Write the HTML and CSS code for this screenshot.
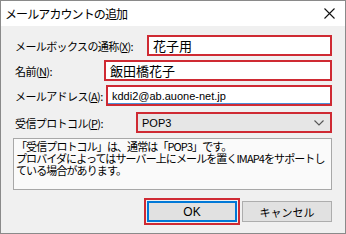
FILE: index.html
```html
<!DOCTYPE html>
<html lang="ja">
<head>
    <meta charset="UTF-8">
    <title>メールアカウントの追加</title>
    <link rel="stylesheet" href="styles.css">
</head>
<body>
    <div class="window">
        <!-- Title bar -->
        <div class="titlebar">
            <span class="title">メールアカウントの追加</span>
            <svg class="close" width="11" height="11" viewBox="0 0 11 11">
                <path d="M0.5 0.5 L10.5 10.5 M10.5 0.5 L0.5 10.5" stroke="#111" stroke-width="1.1" fill="none"/>
            </svg>
        </div>

        <div class="client">
            <div class="row">
                <label class="label label-mailbox">メールボックスの通称(<u>X</u>):</label>
                <div class="field marked">花子用</div>
            </div>
            <div class="row">
                <label class="label label-name">名前(<u>N</u>):</label>
                <div class="field marked">飯田橋花子</div>
            </div>
            <div class="row">
                <label class="label label-address">メールアドレス(<u>A</u>):</label>
                <div class="field marked focused latin">kddi2@ab.auone-net.jp</div>
            </div>
            <div class="row row-protocol">
                <label class="label label-protocol">受信プロトコル(<u>P</u>):</label>
                <div class="select marked">
                    <span class="latin">POP3</span>
                    <svg width="10" height="6" viewBox="0 0 10 6">
                        <path d="M0.5 0.5 L5 5 L9.5 0.5" stroke="#555" stroke-width="1.1" fill="none"/>
                    </svg>
                </div>
            </div>

            <div class="info">
                <div>「受信プロトコル」は、通常は「POP3」です。</div>
                <div>プロバイダによってはサーバー上にメールを置くIMAP4をサポートし</div>
                <div>ている場合があります。</div>
            </div>

            <div class="buttons">
                <button class="btn btn-ok">OK</button>
                <button class="btn">キャンセル</button>
            </div>
        </div>
    </div>
</body>
</html>
```

FILE: styles.css
```css
/* General */
body {
    margin: 0;
    padding: 0;
    background: #ffffff;
    font-family: "Noto Sans CJK JP", "Noto Sans", sans-serif;
    color: #000;
}

.window {
    width: 346px;
    height: 234px;
    box-sizing: border-box;
    border: 1px solid #8a8a8a;
    display: flex;
    flex-direction: column;
    background: #f0f0f0;
}

/* Title bar */
.titlebar {
    height: 25px;
    background: #ffffff;
    display: flex;
    align-items: center;
    justify-content: space-between;
    padding: 0 10px 0 4px;
}

.title {
    font-size: 12px;
    letter-spacing: -0.9px;
}

/* Form rows */
.client {
    flex: 1;
    padding: 9px 13px 0 12px;
    display: flex;
    flex-direction: column;
}

.row {
    display: flex;
    align-items: center;
    height: 21px;
    margin-bottom: 4px;
}

.row-protocol {
    margin-top: 2px;
    margin-bottom: 5px;
}

.label {
    font-size: 11px;
    letter-spacing: -0.6px;
    padding-left: 2px;
    flex-shrink: 0;
}

.label-mailbox { width: 132px; }
.label-name { width: 89px; }
.label-address { width: 91px; }
.label-protocol { width: 121px; }

.field,
.select {
    flex: 1;
    height: 21px;
    box-sizing: border-box;
    display: flex;
    align-items: center;
    padding-left: 4px;
    font-size: 13px;
}

.field {
    background: #ffffff;
}

.marked {
    border: 2px solid #cf2a33;
}

.focused {
    box-shadow: inset 0 -1px 0 #4a90d9;
}

.latin {
    font-family: "Liberation Sans", Arial, sans-serif;
    font-size: 11px;
}

.select {
    background: #e6e6e6;
    justify-content: space-between;
    padding-right: 6px;
}

/* Info box */
.info {
    height: 52px;
    box-sizing: border-box;
    border: 1px solid #a8a8a8;
    background: #fafafa;
    padding: 1px 2px 0;
    font-size: 11px;
    line-height: 12px;
    letter-spacing: -0.9px;
    white-space: nowrap;
}

/* Buttons */
.buttons {
    display: flex;
    justify-content: flex-end;
    gap: 5px;
    margin-top: 11px;
}

.btn {
    width: 90px;
    height: 21px;
    box-sizing: border-box;
    border: 1px solid #adadad;
    background: #e1e1e1;
    font-family: "Noto Sans CJK JP", sans-serif;
    font-size: 11px;
    padding: 0;
}

.btn-ok {
    border: 2px solid #0078d7;
    outline: 2px solid #cf2a33;
    outline-offset: 1px;
    font-family: "Liberation Sans", Arial, sans-serif;
    font-size: 12px;
}
```
